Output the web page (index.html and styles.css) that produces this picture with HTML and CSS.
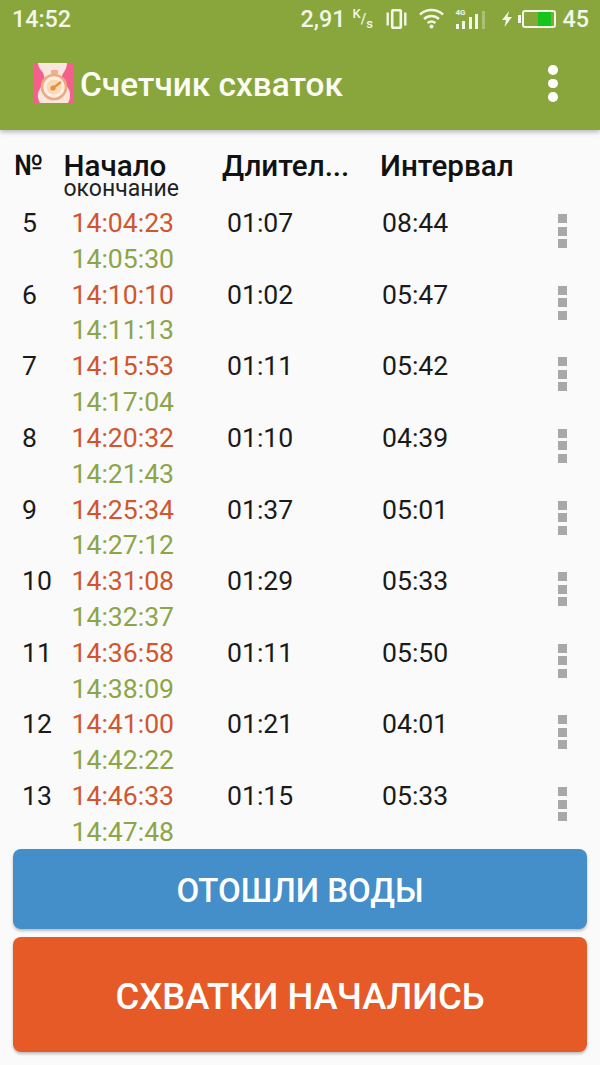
FILE: index.html
```html
<!DOCTYPE html>
<html>
<head>
	<meta charset="utf-8">
	<meta name="viewport" content="width=device-width, initial-scale=1">
	<title>Счетчик схваток</title>
	<link rel="stylesheet" href="styles.css">
</head>
<body>
	<header class="appbar">
		<div class="status">
			<span class="clock">14:52</span>
			<div class="status-right">
				<span class="speed">2,91</span>
				<span class="unit"><sup>K</sup>/<sub>s</sub></span>
				<svg class="ic-vibrate" width="21" height="20" viewBox="0 0 21 20">
					<rect x="6.2" y="1.2" width="8.6" height="17.6" rx="1" fill="none" stroke="#f3f6e8" stroke-width="2.6"/>
					<rect x="0.5" y="3.5" width="2.4" height="13" fill="#f3f6e8"/>
					<rect x="18.1" y="3.5" width="2.4" height="13" fill="#f3f6e8"/>
				</svg>
				<svg class="ic-wifi" width="25" height="21" viewBox="0 0 25 21" fill="none" stroke="#f3f6e8" stroke-width="2.4">
					<path d="M1 6.5C7.5 0.5 17.5 0.5 24 6.5"/>
					<path d="M5 11C9.5 7 15.5 7 20 11"/>
					<path d="M8.5 15C11 13 14 13 16.5 15"/>
					<circle cx="12.5" cy="18.5" r="2" fill="#f3f6e8" stroke="none"/>
				</svg>
				<div class="signal">
					<span class="lte">4G</span>
					<i class="bar b1"></i><i class="bar b2"></i><i class="bar b3"></i><i class="bar b4"></i><i class="bar b5"></i>
				</div>
				<svg class="ic-bolt" width="10" height="16" viewBox="0 0 10 16">
					<path d="M7 0L0 9H4L2.5 16L10 6H5.5Z" fill="#f3f6e8"/>
				</svg>
				<div class="battery">
					<div class="battery-fill"></div>
				</div>
				<span class="level">45</span>
			</div>
		</div>
		<div class="toolbar">
			<svg class="logo" width="40" height="40" viewBox="0 0 40 40">
				<rect width="40" height="40" fill="#f4608c"/>
				<path d="M4 0H33C33 7 28 10 28 14C28 20 37 25 36 32C36 36 35 38 34 40H6C3 34 3 30 7 24C11 19 11 14 9 10C7 7 4 4 4 0Z" fill="#fbe6de"/>
				<rect x="17" y="7" width="7" height="4" fill="#eeb088"/>
				<circle cx="20" cy="24" r="12" fill="#fdeee2" stroke="#eda97f" stroke-width="2.6"/>
				<circle cx="20" cy="24" r="7.5" fill="#fbd9b8"/>
				<path d="M19 25L27 19" stroke="#e8913a" stroke-width="2.4"/>
				<circle cx="19" cy="25" r="2.6" fill="#e8913a"/>
			</svg>
			<h1 class="title">Счетчик схваток</h1>
			<div class="menu"><i></i><i></i><i></i></div>
		</div>
	</header>

	<main class="content">
		<div class="table-head">
			<div class="th th-num">№</div>
			<div class="th-start">
				<div class="th th-begin">Начало</div>
				<div class="th-sub">окончание</div>
			</div>
			<div class="th th-dur">Длител...</div>
			<div class="th th-int">Интервал</div>
		</div>
		<div class="list">
			<div class="row">
				<div class="num">5</div>
				<div class="times"><div class="t-start">14:04:23</div><div class="t-end">14:05:30</div></div>
				<div class="dur">01:07</div>
				<div class="int">08:44</div>
				<div class="more"><i></i><i></i><i></i></div>
			</div>
			<div class="row">
				<div class="num">6</div>
				<div class="times"><div class="t-start">14:10:10</div><div class="t-end">14:11:13</div></div>
				<div class="dur">01:02</div>
				<div class="int">05:47</div>
				<div class="more"><i></i><i></i><i></i></div>
			</div>
			<div class="row">
				<div class="num">7</div>
				<div class="times"><div class="t-start">14:15:53</div><div class="t-end">14:17:04</div></div>
				<div class="dur">01:11</div>
				<div class="int">05:42</div>
				<div class="more"><i></i><i></i><i></i></div>
			</div>
			<div class="row">
				<div class="num">8</div>
				<div class="times"><div class="t-start">14:20:32</div><div class="t-end">14:21:43</div></div>
				<div class="dur">01:10</div>
				<div class="int">04:39</div>
				<div class="more"><i></i><i></i><i></i></div>
			</div>
			<div class="row">
				<div class="num">9</div>
				<div class="times"><div class="t-start">14:25:34</div><div class="t-end">14:27:12</div></div>
				<div class="dur">01:37</div>
				<div class="int">05:01</div>
				<div class="more"><i></i><i></i><i></i></div>
			</div>
			<div class="row">
				<div class="num">10</div>
				<div class="times"><div class="t-start">14:31:08</div><div class="t-end">14:32:37</div></div>
				<div class="dur">01:29</div>
				<div class="int">05:33</div>
				<div class="more"><i></i><i></i><i></i></div>
			</div>
			<div class="row">
				<div class="num">11</div>
				<div class="times"><div class="t-start">14:36:58</div><div class="t-end">14:38:09</div></div>
				<div class="dur">01:11</div>
				<div class="int">05:50</div>
				<div class="more"><i></i><i></i><i></i></div>
			</div>
			<div class="row">
				<div class="num">12</div>
				<div class="times"><div class="t-start">14:41:00</div><div class="t-end">14:42:22</div></div>
				<div class="dur">01:21</div>
				<div class="int">04:01</div>
				<div class="more"><i></i><i></i><i></i></div>
			</div>
			<div class="row">
				<div class="num">13</div>
				<div class="times"><div class="t-start">14:46:33</div><div class="t-end">14:47:48</div></div>
				<div class="dur">01:15</div>
				<div class="int">05:33</div>
				<div class="more"><i></i><i></i><i></i></div>
			</div>
		</div>
		<div class="buttons">
			<button class="btn btn-water" type="button">ОТОШЛИ ВОДЫ</button>
			<button class="btn btn-start" type="button">СХВАТКИ НАЧАЛИСЬ</button>
		</div>
	</main>
</body>
</html>
```

FILE: styles.css
```css
/* General Reset */
* {
	box-sizing: border-box;
	margin: 0;
	padding: 0;
}

body {
	width: 600px;
	height: 1065px;
	display: flex;
	flex-direction: column;
	background: #fafafa;
	font-family: Roboto, "Noto Sans", sans-serif;
	color: #1a1a1a;
	overflow: hidden;
}

/* App bar */
.appbar {
	height: 130px;
	flex-shrink: 0;
	background: #88a63c;
	color: #fff;
	box-shadow: 0 2px 5px rgba(0, 0, 0, 0.28);
	position: relative;
}

.status {
	height: 38px;
	display: flex;
	align-items: center;
	justify-content: space-between;
	padding: 0 11px 1px 12px;
}

.clock, .speed, .level {
	font-size: 23.3px;
	font-weight: 500;
	line-height: 26px;
	color: #f3f6e8;
}

.status-right {
	display: flex;
	align-items: center;
}

.unit {
	width: 20px;
	margin-left: 7px;
	font-size: 14px;
	font-weight: 500;
	color: #f3f6e8;
	white-space: nowrap;
}

.unit sup, .unit sub {
	font-size: 13px;
	line-height: 0;
}

.ic-vibrate {
	margin-left: 13px;
}

.ic-wifi {
	margin-left: 12px;
}

.signal {
	width: 30px;
	height: 20px;
	margin-left: 12px;
	display: flex;
	align-items: flex-end;
	gap: 3.6px;
	position: relative;
}

.lte {
	position: absolute;
	left: 0;
	top: 0;
	font-size: 8px;
	font-weight: 700;
	line-height: 8px;
	color: #f3f6e8;
}

.bar {
	display: block;
	flex-shrink: 0;
	width: 3px;
	background: #f3f6e8;
}

.b1 {
	height: 5px;
}

.b2 {
	height: 8px;
}

.b3 {
	height: 12px;
}

.b4 {
	height: 15px;
}

.b5 {
	height: 18px;
	background: rgba(255, 255, 255, 0.3);
}

.ic-bolt {
	margin-left: 16px;
}

.battery {
	width: 34px;
	height: 18px;
	margin-left: 10px;
	border: 2px solid #f3f6e8;
	border-radius: 3px;
	padding-left: 14px;
	position: relative;
}

.battery::before {
	content: "";
	position: absolute;
	left: -6px;
	top: 3px;
	width: 3px;
	height: 8px;
	background: #f3f6e8;
}

.battery-fill {
	width: 13px;
	height: 100%;
	background: #16c41c;
}

.level {
	margin-left: 7px;
}

.toolbar {
	height: 92px;
	display: flex;
	align-items: center;
	padding: 0 0 0 34px;
}

.logo {
	margin-top: -2px;
}

.title {
	flex: 1;
	margin-left: 6px;
	font-size: 33.4px;
	font-weight: 500;
	color: #fdfdf5;
}

.menu {
	width: 94px;
	display: flex;
	flex-direction: column;
	align-items: center;
	gap: 4px;
	margin-top: -1px;
}

.menu i {
	display: block;
	width: 9.5px;
	height: 9.5px;
	border-radius: 50%;
	background: #fff;
}

/* Table */
.content {
	flex: 1;
	min-height: 0;
	display: flex;
	flex-direction: column;
}

.table-head {
	height: 75px;
	flex-shrink: 0;
	display: flex;
	padding: 21px 0 0 14px;
}

.th {
	font-size: 29.6px;
	font-weight: 500;
	line-height: 30px;
	color: #111;
}

.th-num {
	width: 49.5px;
	font-size: 28.5px;
}

.th-start {
	width: 158.5px;
}

.th-begin {
	margin-top: 1px;
	line-height: 28px;
}

.th-sub {
	font-size: 23px;
	line-height: 18px;
	color: #222;
}

.th-dur {
	width: 158px;
}

.list {
	flex: 1;
	min-height: 0;
	overflow: hidden;
}

.row {
	height: 71.625px;
	display: flex;
	font-size: 26.6px;
	line-height: 35.8px;
}

.num {
	width: 71.5px;
	padding-left: 22px;
}

.times {
	width: 155.5px;
}

.t-start {
	color: #d0562f;
}

.t-end {
	color: #8ca548;
}

.dur {
	width: 155px;
}

.int {
	width: 175.5px;
}

.more {
	width: 9.5px;
	display: flex;
	flex-direction: column;
	gap: 3.5px;
	padding-top: 9px;
}

.more i {
	display: block;
	width: 9.5px;
	height: 9px;
	background: #a8a8a8;
}

/* Buttons */
.buttons {
	flex-shrink: 0;
	display: flex;
	flex-direction: column;
	gap: 8px;
	padding: 2px 13px 13px;
}

.btn {
	display: block;
	width: 100%;
	border: none;
	border-radius: 8px;
	color: #fff;
	font-family: inherit;
	font-weight: 500;
	box-shadow: 0 2px 3px rgba(0, 0, 0, 0.25);
}

.btn-water {
	height: 80px;
	padding-top: 2px;
	background: #448ec9;
	font-size: 33px;
}

.btn-start {
	height: 115px;
	padding-top: 4px;
	background: #e55a27;
	font-size: 36.4px;
}
```
